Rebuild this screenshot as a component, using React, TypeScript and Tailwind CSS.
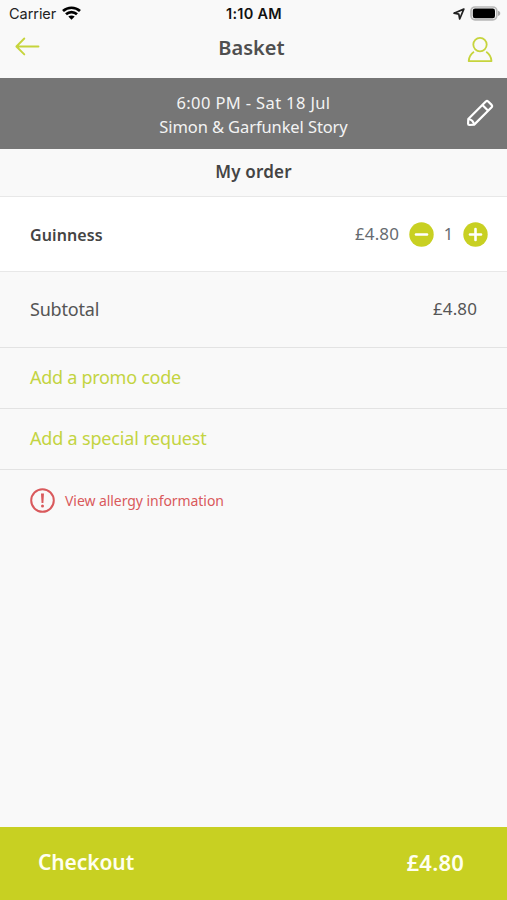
import React from 'react';

function StatusBar() {
  return (
    <div className="flex h-7 items-center justify-between pl-[9px] pr-[6px] font-['Inter','Liberation_Sans',sans-serif] text-[14.5px] leading-5 text-[#222]">
      <div className="flex flex-1 items-center gap-[6px]">
        <span className="tracking-[-0.05px]">Carrier</span>
        <svg className="-mt-0.5" width="19" height="14" viewBox="0 0 19 14" fill="none" stroke="#000" strokeWidth="2.7">
          <path d="M1 5.1C5.8.6 13.2.6 18 5.1" />
          <path d="M4 8.3c3.1-2.9 7.9-2.9 11 0" />
          <path d="M9.5 13.8 6.3 10.6c1.8-1.6 4.6-1.6 6.4 0Z" fill="#000" stroke="none" />
        </svg>
      </div>
      <span className="-ml-0.5 text-[14.5px] font-semibold tracking-[0.25px] text-[#111]">1:10 AM</span>
      <div className="flex flex-1 items-center justify-end gap-[5px]">
        <svg className="-mt-px" width="12" height="12" viewBox="0 0 12 12" fill="none" stroke="#222" strokeWidth="1.7" strokeLinejoin="round">
          <path d="M10.8 1.1 1 5.2l4.8 1 .9 4.8Z" />
        </svg>
        <svg className="-mt-0.5" width="31" height="15" viewBox="0 0 31 15">
          <rect x="1" y="1" width="25.8" height="12.8" rx="4" fill="#f8f8f8" stroke="#b8b8b8" strokeWidth="1.7" />
          <rect x="2.8" y="2.5" width="22.2" height="9.8" rx="2.2" fill="#000" />
          <path d="M28 4.8c3 .8 3 4.4 0 5.2Z" fill="#aaa" />
        </svg>
      </div>
    </div>
  );
}

function NavBar() {
  return (
    <div className="flex h-[50px] items-start justify-between pl-[15px] pr-[14px]">
      <svg className="mt-[9px]" width="26" height="20" viewBox="0 0 26 20" fill="none" stroke="#c6d43c" strokeWidth="1.9" strokeLinecap="round" strokeLinejoin="round">
        <path d="M23.5 9.5H1.6M9.3 1.5 1.4 9.5l7.9 7.9" />
      </svg>
      <h1 className="-ml-[5px] mt-[6px] text-[20px] font-semibold leading-7 text-[#4f4f4f]">Basket</h1>
      <svg className="mt-[9px]" width="26" height="26" viewBox="0 0 26 26" fill="none" stroke="#c6d43c" strokeWidth="1.8" strokeLinejoin="round">
        <circle cx="13" cy="7.6" r="6.7" />
        <path d="M7 14.8C4 16.800 2 20 1.700 24.100h22.800c-.3-4.100-2.300-7.300-5.300-9.300" />
      </svg>
    </div>
  );
}

function EventBanner() {
  return (
    <div className="relative h-[71px] bg-[#767676] pt-[13px] text-center text-[16.5px] leading-6 text-[#f3f3f3]">
      <p className="tracking-[0.37px]">6:00 PM - Sat 18 Jul</p>
      <p className="tracking-[-0.1px]">Simon &amp; Garfunkel Story</p>
      <svg className="absolute right-[13px] top-[21px]" width="28" height="28" viewBox="0 0 28 28" fill="none" stroke="#fff" strokeWidth="2.2" strokeLinejoin="round">
        <path d="M2.300 20 19.800 2.500q1.200-1 2.400 0l3.400 3.400q1 1.200 0 2.400L8.200 25.600 3.400 26Q2.100 26 2.100 24.800Z" />
        <path d="m16.400 6 5.800 5.800M2.300 20q4.800.8 5.900 5.600" />
      </svg>
    </div>
  );
}

function RoundButton({ plus }: { plus?: boolean }) {
  return (
    <button className="block" aria-label={plus ? 'Add one' : 'Remove one'}>
      <svg width="25" height="25" viewBox="0 0 25 25" stroke="#fff" strokeWidth="2.6" strokeLinecap="round">
        <circle cx="12.5" cy="12.5" r="12.2" fill="#c8d022" stroke="none" />
        <path d="M7 12.5h11" />
        {plus && <path d="M12.5 7v11" />}
      </svg>
    </button>
  );
}

export default function App() {
  return (
    <div className="flex h-[900px] w-[507px] flex-col bg-[#f9f9f9] font-['Noto_Sans','Open_Sans',sans-serif] text-[#555]">
      <StatusBar />
      <NavBar />
      <EventBanner />
      <h2 className="h-12 border-b border-[#e8e8e8] pt-[11px] text-center text-[17px] font-semibold leading-6 tracking-[0.2px] text-[#444]">My order</h2>
      <div className="flex h-[75px] items-center border-b border-[#e8e8e8] bg-white pl-[30px] pr-[19px] text-[16.5px]">
        <span className="mt-px flex-1 text-[16px] font-semibold tracking-[0.1px] text-[#444]">Guinness</span>
        <span className="mr-[10px] text-[17px] tracking-[0.1px] text-[#666b70]">£4.80</span>
        <RoundButton />
        <span className="mt-px w-[29px] text-center text-[#666b70]">1</span>
        <RoundButton plus />
      </div>
      <div className="flex h-[76px] items-center justify-between border-b border-[#e3e3e3] pb-px pl-[30px] pr-[30px]">
        <span className="text-[18px] tracking-[-0.2px]">Subtotal</span>
        <span className="text-[17px] tracking-[0.1px]">£4.80</span>
      </div>
      <div className="flex h-[61px] items-center border-b border-[#e3e3e3] pb-0.5 pl-[30px] text-[18px] tracking-[-0.28px] text-[#c3d441]">Add a promo code</div>
      <div className="flex h-[61px] items-center border-b border-[#e3e3e3] pb-0.5 pl-[30px] text-[18px] tracking-[-0.18px] text-[#c3d441]">Add a special request</div>
      <div className="flex h-[61px] items-center gap-[10px] pl-[30px] text-[14px] tracking-[-0.06px] text-[#d9595c]">
        <svg width="25" height="25" viewBox="0 0 25 25" fill="none" stroke="#d9595c" strokeWidth="2">
          <circle cx="12.5" cy="12.5" r="11.3" />
          <path d="M11 5.500h3l-.6 9.500h-1.800Z" fill="#d9595c" stroke="none" />
          <circle cx="12.5" cy="17.9" r="1.5" fill="#d9595c" stroke="none" />
        </svg>
        <span>View allergy information</span>
      </div>
      <div className="mt-auto flex h-[73px] items-center justify-between bg-[#c8d022] pb-0.5 pl-[38px] pr-[43px] text-[21px] font-semibold text-[#fffff0]">
        <span className="tracking-[-0.1px]">Checkout</span>
        <span className="text-[22px] tracking-[0.2px]">£4.80</span>
      </div>
    </div>
  );
}
